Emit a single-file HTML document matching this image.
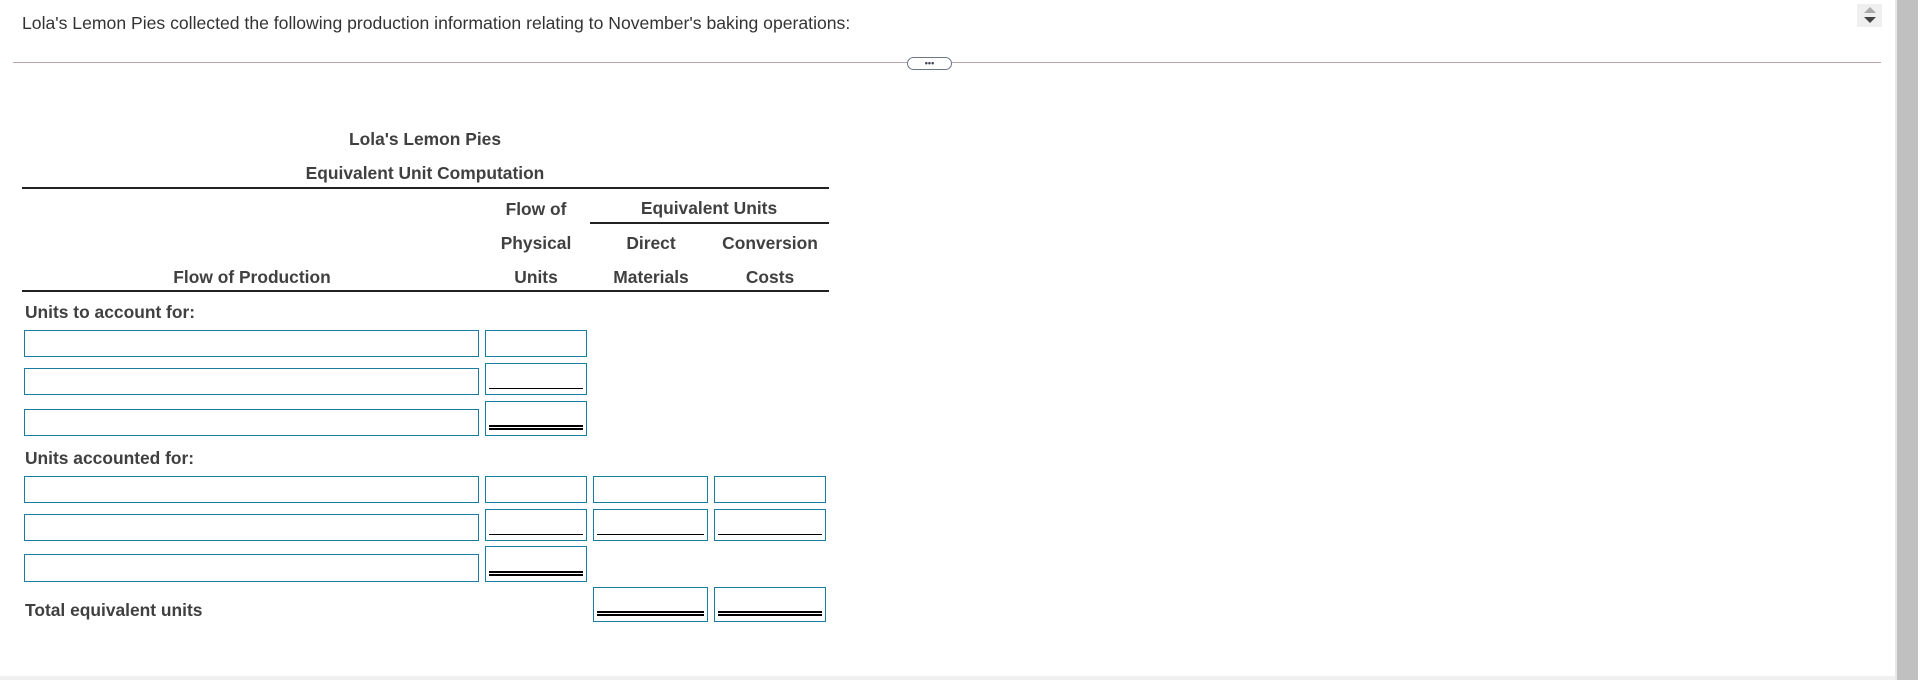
<!DOCTYPE html>
<html><head><style>
body{margin:0;width:1920px;height:680px;background:#fff;position:relative;overflow:hidden;font-family:"Liberation Sans",Arial,sans-serif;}
.a{position:absolute;}
.t{position:absolute;font-size:17.4px;font-weight:bold;color:#404040;white-space:nowrap;line-height:20px;}
.c{transform:translateX(-50%);}
.b{position:absolute;border:1.5px solid #1a7da0;box-sizing:border-box;background:#fff;}
.s::after{content:"";position:absolute;left:3px;right:3px;bottom:5px;height:1px;background:#000;}
.d::after{content:"";position:absolute;left:3px;right:3px;bottom:5px;height:5px;border-top:2px solid #000;border-bottom:2px solid #000;box-sizing:border-box;}
</style></head><body>
<div class="a" style="left:22px;top:13px;font-size:17.6px;color:#333;white-space:nowrap;line-height:20px">Lola's Lemon Pies collected the following production information relating to November's baking operations:</div>
<div class="a" style="left:13px;top:62px;width:1868px;height:1px;background:#b9a3ac"></div>
<div class="a" style="left:907px;top:57px;width:43px;height:11px;border:1px solid #6b7785;border-radius:7px;background:#fff;font-size:9px;line-height:10px;text-align:center;color:#445;font-weight:bold">•••</div>
<div class="a" style="left:1857px;top:4px;width:25px;height:23px;background:#efefef"></div>
<div class="a" style="left:1864px;top:7px;width:0;height:0;border-left:6px solid transparent;border-right:6px solid transparent;border-bottom:6px solid #aaa"></div>
<div class="a" style="left:1864px;top:17px;width:0;height:0;border-left:6px solid transparent;border-right:6px solid transparent;border-top:6px solid #444"></div>
<div class="a" style="left:1895px;top:0;width:2px;height:680px;background:#e8e8e8"></div>
<div class="a" style="left:1897px;top:0;width:21px;height:680px;background:#c0c0c0"></div>
<div class="a" style="left:0;top:676px;width:1895px;height:4px;background:#f0f0f0"></div>

<div class="t c" style="left:425px;top:129px">Lola's Lemon Pies</div>
<div class="t c" style="left:425px;top:163px">Equivalent Unit Computation</div>
<div class="a" style="left:22px;top:187px;width:807px;height:1.5px;background:#222"></div>
<div class="t c" style="left:536px;top:199px">Flow of</div>
<div class="t c" style="left:709px;top:198px">Equivalent Units</div>
<div class="a" style="left:590px;top:222px;width:239px;height:1.5px;background:#222"></div>
<div class="t c" style="left:536px;top:233px">Physical</div>
<div class="t c" style="left:651px;top:233px">Direct</div>
<div class="t c" style="left:770px;top:233px">Conversion</div>
<div class="t c" style="left:252px;top:267px">Flow of Production</div>
<div class="t c" style="left:536px;top:267px">Units</div>
<div class="t c" style="left:651px;top:267px">Materials</div>
<div class="t c" style="left:770px;top:267px">Costs</div>
<div class="a" style="left:22px;top:290px;width:807px;height:1.5px;background:#222"></div>
<div class="t" style="left:25px;top:302px">Units to account for:</div>

<div class="b" style="left:24px;top:330px;width:455px;height:27px"></div>
<div class="b" style="left:485px;top:330px;width:102px;height:27px"></div>
<div class="b" style="left:24px;top:368px;width:455px;height:27px"></div>
<div class="b s" style="left:485px;top:363px;width:102px;height:32px"></div>
<div class="b" style="left:24px;top:409px;width:455px;height:27px"></div>
<div class="b d" style="left:485px;top:401px;width:102px;height:35px"></div>

<div class="t" style="left:25px;top:448px">Units accounted for:</div>
<div class="b" style="left:24px;top:476px;width:455px;height:27px"></div>
<div class="b" style="left:485px;top:476px;width:102px;height:27px"></div>
<div class="b" style="left:593px;top:476px;width:115px;height:27px"></div>
<div class="b" style="left:714px;top:476px;width:112px;height:27px"></div>
<div class="b" style="left:24px;top:514px;width:455px;height:27px"></div>
<div class="b s" style="left:485px;top:509px;width:102px;height:32px"></div>
<div class="b s" style="left:593px;top:509px;width:115px;height:32px"></div>
<div class="b s" style="left:714px;top:509px;width:112px;height:32px"></div>
<div class="b" style="left:24px;top:554px;width:455px;height:28px"></div>
<div class="b d" style="left:485px;top:546px;width:102px;height:36px"></div>
<div class="t" style="left:25px;top:600px">Total equivalent units</div>
<div class="b d" style="left:593px;top:587px;width:115px;height:35px"></div>
<div class="b d" style="left:714px;top:587px;width:112px;height:35px"></div>
</body></html>
